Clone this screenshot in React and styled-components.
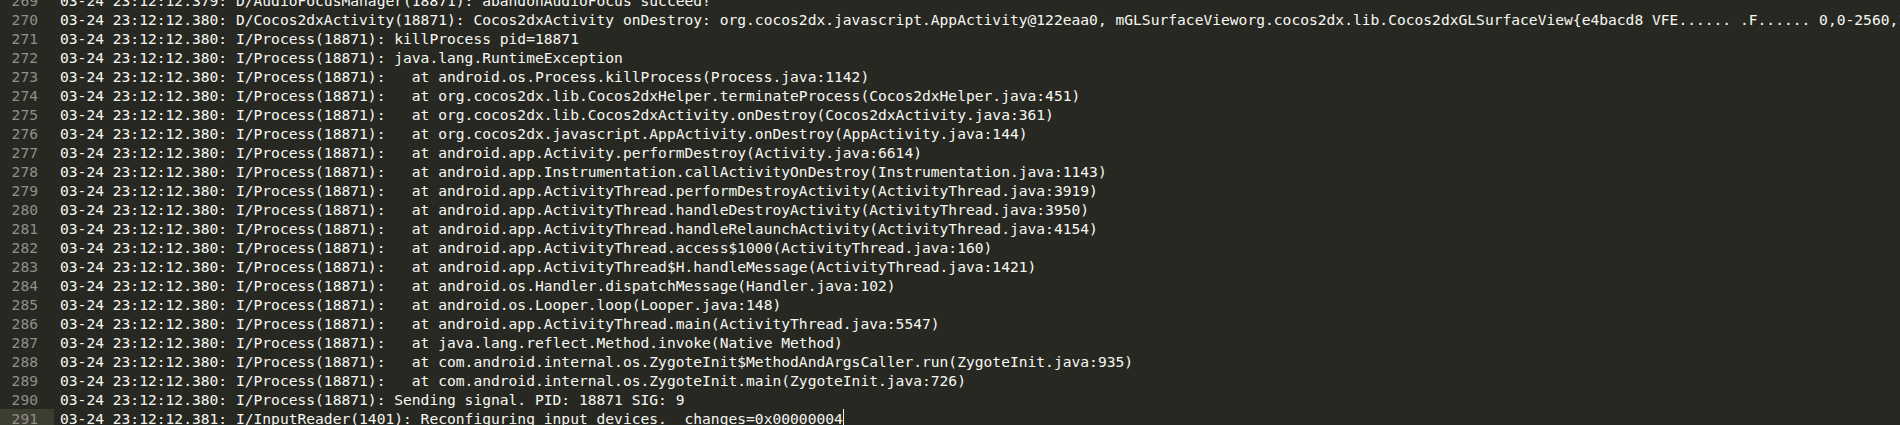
import React from "react";
import styled, { createGlobalStyle } from "styled-components";

const GlobalStyle = createGlobalStyle`
  html, body {
    margin: 0;
    padding: 0;
    background: #272822;
    overflow: hidden;
  }
`;

const Editor = styled.div`
  display: flex;
  flex-direction: column;
  width: 1900px;
  height: 425px;
  overflow: hidden;
  background: #272822;
  font-family: "DejaVu Sans Mono", "Liberation Mono", monospace;
  font-size: 14.62px;
`;

const Lines = styled.div`
  display: flex;
  flex-direction: column;
  margin-top: -9px;
`;

const Row = styled.div`
  display: flex;
  height: 19px;
  line-height: 19px;
`;

const Gutter = styled.div`
  flex: 0 0 54px;
  box-sizing: border-box;
  padding-right: 16px;
  text-align: right;
  color: #90908a;
  background: ${(props) => (props.current ? "#3e3d32" : "transparent")};
`;

const Code = styled.div`
  padding-left: 6px;
  color: #f8f8f2;
  white-space: pre;
`;

const Caret = styled.span`
  display: inline-block;
  width: 1px;
  height: 19px;
  vertical-align: top;
  background: #f8f8f0;
`;

const P = "03-24 23:12:12.380: I/Process(18871): ";

const lines = [
  "03-24 23:12:12.379: D/AudioFocusManager(18871): abandonAudioFocus succeed!",
  "03-24 23:12:12.380: D/Cocos2dxActivity(18871): Cocos2dxActivity onDestroy: org.cocos2dx.javascript.AppActivity@122eaa0, mGLSurfaceVieworg.cocos2dx.lib.Cocos2dxGLSurfaceView{e4bacd8 VFE...... .F...... 0,0-2560,1440 #0}",
  P + "killProcess pid=18871",
  P + "java.lang.RuntimeException",
  P + "  at android.os.Process.killProcess(Process.java:1142)",
  P + "  at org.cocos2dx.lib.Cocos2dxHelper.terminateProcess(Cocos2dxHelper.java:451)",
  P + "  at org.cocos2dx.lib.Cocos2dxActivity.onDestroy(Cocos2dxActivity.java:361)",
  P + "  at org.cocos2dx.javascript.AppActivity.onDestroy(AppActivity.java:144)",
  P + "  at android.app.Activity.performDestroy(Activity.java:6614)",
  P + "  at android.app.Instrumentation.callActivityOnDestroy(Instrumentation.java:1143)",
  P + "  at android.app.ActivityThread.performDestroyActivity(ActivityThread.java:3919)",
  P + "  at android.app.ActivityThread.handleDestroyActivity(ActivityThread.java:3950)",
  P + "  at android.app.ActivityThread.handleRelaunchActivity(ActivityThread.java:4154)",
  P + "  at android.app.ActivityThread.access$1000(ActivityThread.java:160)",
  P + "  at android.app.ActivityThread$H.handleMessage(ActivityThread.java:1421)",
  P + "  at android.os.Handler.dispatchMessage(Handler.java:102)",
  P + "  at android.os.Looper.loop(Looper.java:148)",
  P + "  at android.app.ActivityThread.main(ActivityThread.java:5547)",
  P + "  at java.lang.reflect.Method.invoke(Native Method)",
  P + "  at com.android.internal.os.ZygoteInit$MethodAndArgsCaller.run(ZygoteInit.java:935)",
  P + "  at com.android.internal.os.ZygoteInit.main(ZygoteInit.java:726)",
  P + "Sending signal. PID: 18871 SIG: 9",
  "03-24 23:12:12.381: I/InputReader(1401): Reconfiguring input devices.  changes=0x00000004",
];

const FIRST = 269;

function App() {
  const last = lines.length - 1;
  return (
    <>
      <GlobalStyle />
      <Editor>
        <Lines>
          {lines.map((text, i) => (
            <Row key={i}>
              <Gutter current={i === last}>{FIRST + i}</Gutter>
              <Code>
                {text}
                {i === last && <Caret />}
              </Code>
            </Row>
          ))}
        </Lines>
      </Editor>
    </>
  );
}

export default App;
